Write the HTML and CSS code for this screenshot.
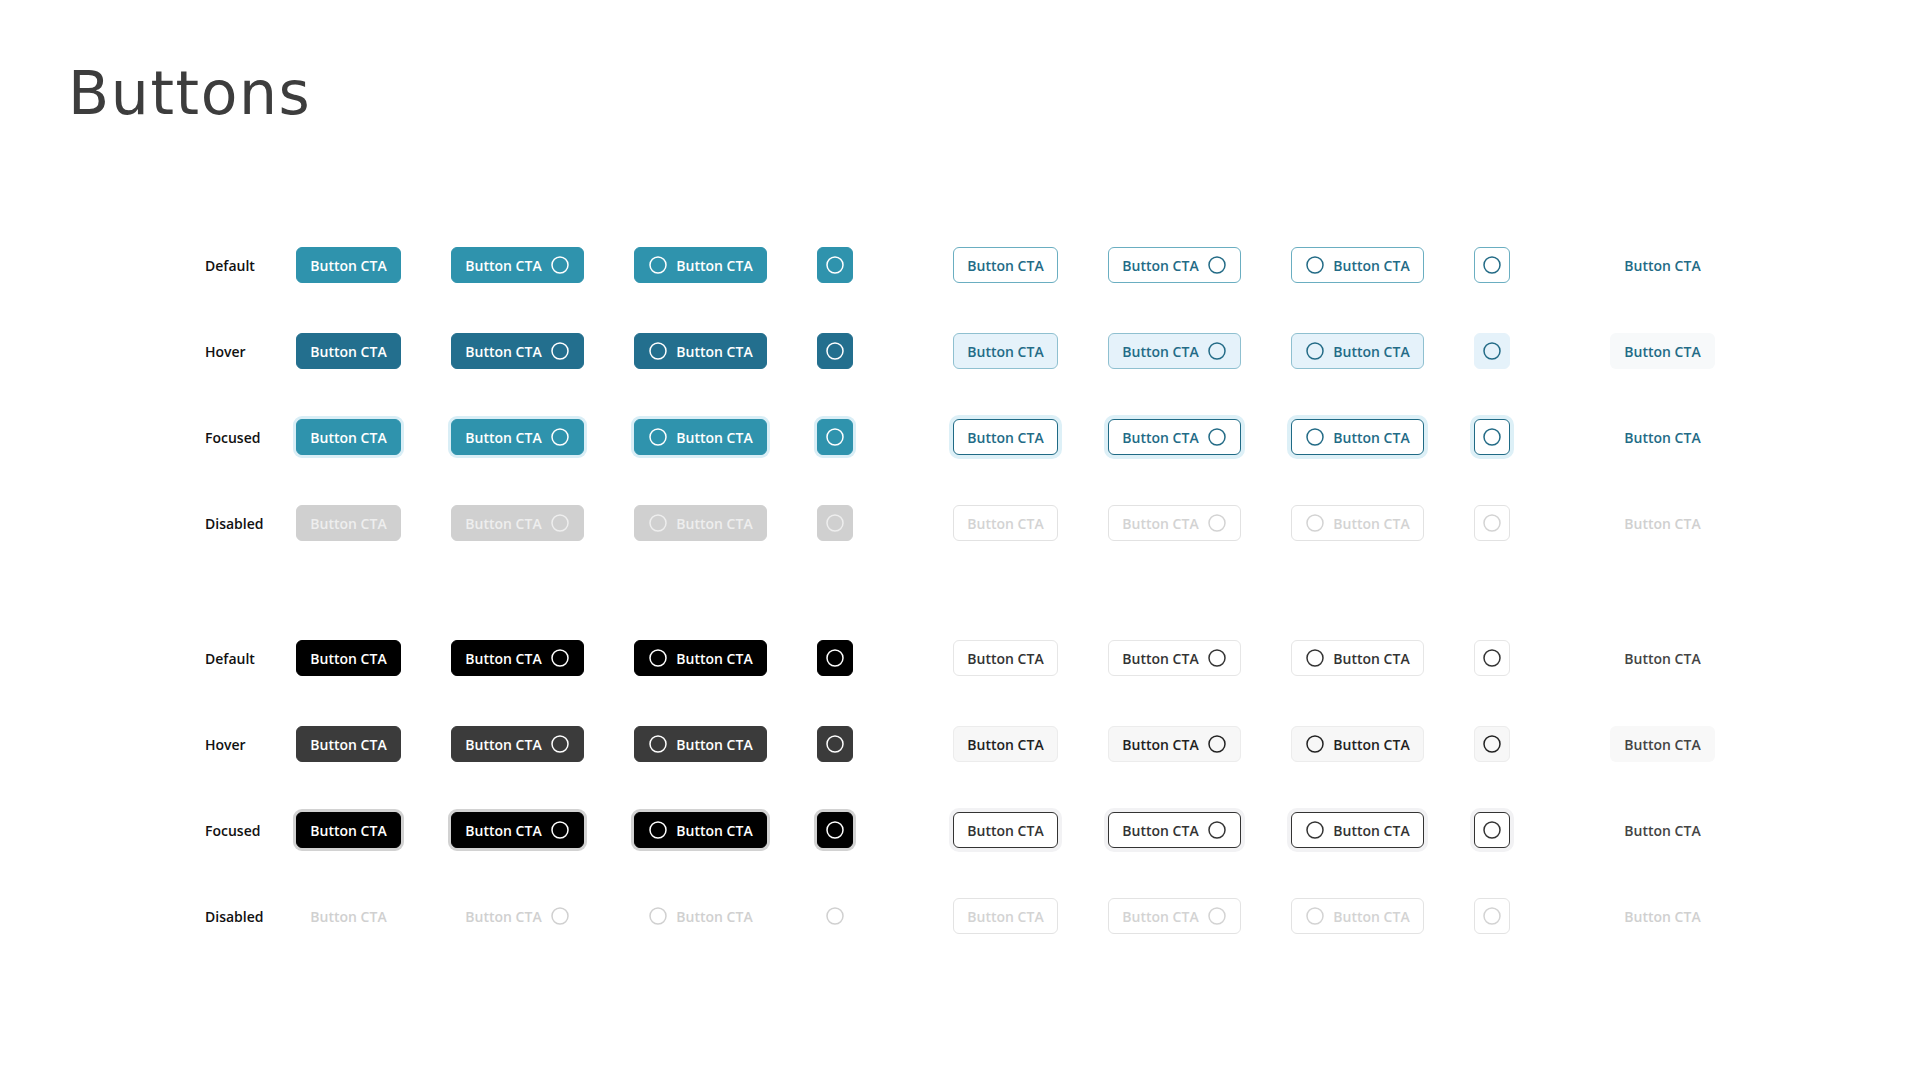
FILE: index.html
```html
<!DOCTYPE html>
<html>
<head>
<meta charset="utf-8">
<link rel="stylesheet" href="styles.css">
<title>Buttons</title>
</head>
<body>
<h1 class="title">Buttons</h1>

<section class="grid teal">
  <div class="label">Default</div>
  <div class="btn fill">Button CTA</div>
  <div class="btn fill">Button CTA <svg class="ico" viewBox="0 0 20 20"><circle cx="10" cy="10" r="8"/></svg></div>
  <div class="btn fill"><svg class="ico" viewBox="0 0 20 20"><circle cx="10" cy="10" r="8"/></svg> Button CTA</div>
  <div class="btn fill sq"><svg class="ico" viewBox="0 0 20 20"><circle cx="10" cy="10" r="8"/></svg></div>
  <div class="btn line">Button CTA</div>
  <div class="btn line">Button CTA <svg class="ico" viewBox="0 0 20 20"><circle cx="10" cy="10" r="8"/></svg></div>
  <div class="btn line"><svg class="ico" viewBox="0 0 20 20"><circle cx="10" cy="10" r="8"/></svg> Button CTA</div>
  <div class="btn line sq"><svg class="ico" viewBox="0 0 20 20"><circle cx="10" cy="10" r="8"/></svg></div>
  <div class="btn text">Button CTA</div>

  <div class="label">Hover</div>
  <div class="btn fill hover">Button CTA</div>
  <div class="btn fill hover">Button CTA <svg class="ico" viewBox="0 0 20 20"><circle cx="10" cy="10" r="8"/></svg></div>
  <div class="btn fill hover"><svg class="ico" viewBox="0 0 20 20"><circle cx="10" cy="10" r="8"/></svg> Button CTA</div>
  <div class="btn fill hover sq"><svg class="ico" viewBox="0 0 20 20"><circle cx="10" cy="10" r="8"/></svg></div>
  <div class="btn line hover">Button CTA</div>
  <div class="btn line hover">Button CTA <svg class="ico" viewBox="0 0 20 20"><circle cx="10" cy="10" r="8"/></svg></div>
  <div class="btn line hover"><svg class="ico" viewBox="0 0 20 20"><circle cx="10" cy="10" r="8"/></svg> Button CTA</div>
  <div class="btn line hover sq nob"><svg class="ico" viewBox="0 0 20 20"><circle cx="10" cy="10" r="8"/></svg></div>
  <div class="btn text hover">Button CTA</div>

  <div class="label">Focused</div>
  <div class="btn fill focus">Button CTA</div>
  <div class="btn fill focus">Button CTA <svg class="ico" viewBox="0 0 20 20"><circle cx="10" cy="10" r="8"/></svg></div>
  <div class="btn fill focus"><svg class="ico" viewBox="0 0 20 20"><circle cx="10" cy="10" r="8"/></svg> Button CTA</div>
  <div class="btn fill focus sq"><svg class="ico" viewBox="0 0 20 20"><circle cx="10" cy="10" r="8"/></svg></div>
  <div class="btn line focus">Button CTA</div>
  <div class="btn line focus">Button CTA <svg class="ico" viewBox="0 0 20 20"><circle cx="10" cy="10" r="8"/></svg></div>
  <div class="btn line focus"><svg class="ico" viewBox="0 0 20 20"><circle cx="10" cy="10" r="8"/></svg> Button CTA</div>
  <div class="btn line focus sq"><svg class="ico" viewBox="0 0 20 20"><circle cx="10" cy="10" r="8"/></svg></div>
  <div class="btn text">Button CTA</div>

  <div class="label">Disabled</div>
  <div class="btn fill off">Button CTA</div>
  <div class="btn fill off">Button CTA <svg class="ico" viewBox="0 0 20 20"><circle cx="10" cy="10" r="8"/></svg></div>
  <div class="btn fill off"><svg class="ico" viewBox="0 0 20 20"><circle cx="10" cy="10" r="8"/></svg> Button CTA</div>
  <div class="btn fill off sq"><svg class="ico" viewBox="0 0 20 20"><circle cx="10" cy="10" r="8"/></svg></div>
  <div class="btn line off">Button CTA</div>
  <div class="btn line off">Button CTA <svg class="ico" viewBox="0 0 20 20"><circle cx="10" cy="10" r="8"/></svg></div>
  <div class="btn line off"><svg class="ico" viewBox="0 0 20 20"><circle cx="10" cy="10" r="8"/></svg> Button CTA</div>
  <div class="btn line off sq"><svg class="ico" viewBox="0 0 20 20"><circle cx="10" cy="10" r="8"/></svg></div>
  <div class="btn text off">Button CTA</div>
</section>

<section class="grid dark">
  <div class="label">Default</div>
  <div class="btn fill">Button CTA</div>
  <div class="btn fill">Button CTA <svg class="ico" viewBox="0 0 20 20"><circle cx="10" cy="10" r="8"/></svg></div>
  <div class="btn fill"><svg class="ico" viewBox="0 0 20 20"><circle cx="10" cy="10" r="8"/></svg> Button CTA</div>
  <div class="btn fill sq"><svg class="ico" viewBox="0 0 20 20"><circle cx="10" cy="10" r="8"/></svg></div>
  <div class="btn line">Button CTA</div>
  <div class="btn line">Button CTA <svg class="ico" viewBox="0 0 20 20"><circle cx="10" cy="10" r="8"/></svg></div>
  <div class="btn line"><svg class="ico" viewBox="0 0 20 20"><circle cx="10" cy="10" r="8"/></svg> Button CTA</div>
  <div class="btn line sq"><svg class="ico" viewBox="0 0 20 20"><circle cx="10" cy="10" r="8"/></svg></div>
  <div class="btn text">Button CTA</div>

  <div class="label">Hover</div>
  <div class="btn fill hover">Button CTA</div>
  <div class="btn fill hover">Button CTA <svg class="ico" viewBox="0 0 20 20"><circle cx="10" cy="10" r="8"/></svg></div>
  <div class="btn fill hover"><svg class="ico" viewBox="0 0 20 20"><circle cx="10" cy="10" r="8"/></svg> Button CTA</div>
  <div class="btn fill hover sq"><svg class="ico" viewBox="0 0 20 20"><circle cx="10" cy="10" r="8"/></svg></div>
  <div class="btn line hover">Button CTA</div>
  <div class="btn line hover">Button CTA <svg class="ico" viewBox="0 0 20 20"><circle cx="10" cy="10" r="8"/></svg></div>
  <div class="btn line hover"><svg class="ico" viewBox="0 0 20 20"><circle cx="10" cy="10" r="8"/></svg> Button CTA</div>
  <div class="btn line hover sq"><svg class="ico" viewBox="0 0 20 20"><circle cx="10" cy="10" r="8"/></svg></div>
  <div class="btn text hover">Button CTA</div>

  <div class="label">Focused</div>
  <div class="btn fill focus">Button CTA</div>
  <div class="btn fill focus">Button CTA <svg class="ico" viewBox="0 0 20 20"><circle cx="10" cy="10" r="8"/></svg></div>
  <div class="btn fill focus"><svg class="ico" viewBox="0 0 20 20"><circle cx="10" cy="10" r="8"/></svg> Button CTA</div>
  <div class="btn fill focus sq"><svg class="ico" viewBox="0 0 20 20"><circle cx="10" cy="10" r="8"/></svg></div>
  <div class="btn line focus">Button CTA</div>
  <div class="btn line focus">Button CTA <svg class="ico" viewBox="0 0 20 20"><circle cx="10" cy="10" r="8"/></svg></div>
  <div class="btn line focus"><svg class="ico" viewBox="0 0 20 20"><circle cx="10" cy="10" r="8"/></svg> Button CTA</div>
  <div class="btn line focus sq"><svg class="ico" viewBox="0 0 20 20"><circle cx="10" cy="10" r="8"/></svg></div>
  <div class="btn text">Button CTA</div>

  <div class="label">Disabled</div>
  <div class="btn fill off">Button CTA</div>
  <div class="btn fill off">Button CTA <svg class="ico" viewBox="0 0 20 20"><circle cx="10" cy="10" r="8"/></svg></div>
  <div class="btn fill off"><svg class="ico" viewBox="0 0 20 20"><circle cx="10" cy="10" r="8"/></svg> Button CTA</div>
  <div class="btn fill off sq"><svg class="ico" viewBox="0 0 20 20"><circle cx="10" cy="10" r="8"/></svg></div>
  <div class="btn line off">Button CTA</div>
  <div class="btn line off">Button CTA <svg class="ico" viewBox="0 0 20 20"><circle cx="10" cy="10" r="8"/></svg></div>
  <div class="btn line off"><svg class="ico" viewBox="0 0 20 20"><circle cx="10" cy="10" r="8"/></svg> Button CTA</div>
  <div class="btn line off sq"><svg class="ico" viewBox="0 0 20 20"><circle cx="10" cy="10" r="8"/></svg></div>
  <div class="btn text off">Button CTA</div>
</section>
</body>
</html>
```

FILE: styles.css
```css
* { box-sizing: border-box; }

html, body {
  margin: 0;
  padding: 0;
  background: #ffffff;
}

body {
  font-family: "Open Sans", "Noto Sans", sans-serif;
  width: 1920px;
  height: 1080px;
  overflow: hidden;
}

.title {
  margin: 63px 0 0 68px;
  font-family: "DejaVu Sans", sans-serif;
  font-weight: 400;
  font-size: 60px;
  line-height: 60px;
  color: #3d3d3d;
  letter-spacing: 1.6px;
}

.grid {
  display: grid;
  grid-template-columns: 41px 105px 133px 133px 86px 105px 133px 133px 86px 105px;
  grid-auto-rows: 36px;
  column-gap: 50px;
  row-gap: 50px;
  margin-left: 205px;
  align-items: center;
}

.grid.teal { margin-top: 124px; }
.grid.dark { margin-top: 99px; }

.label {
  font-size: 14px;
  font-weight: 600;
  color: #111;
  white-space: nowrap;
}

.btn {
  height: 36px;
  display: flex;
  align-items: center;
  justify-content: center;
  gap: 8px;
  padding: 0 14px;
  border-radius: 6px;
  font-size: 14px;
  font-weight: 600;
  white-space: nowrap;
  border: 1px solid transparent;
}

.btn.sq {
  width: 36px;
  padding: 0;
  justify-self: start;
}

.ico {
  width: 20px;
  height: 20px;
  flex: none;
  fill: none;
  stroke: currentColor;
  stroke-width: 1.5;
}

/* ---------- Teal set ---------- */
.teal .fill { background: #2f93ad; color: #fff; border-color: #2f93ad; }
.teal .fill.hover { background: #236f8e; border-color: #236f8e; }
.teal .fill.focus { box-shadow: 0 0 0 3px #d9eef6; }
.teal .fill.off { background: #d0d0d0; border-color: #d0d0d0; color: #eeeeee; }

.teal .line { background: #fff; color: #236b86; border-color: #6aaec1; }
.teal .line.hover { background: #e5f2fa; border-color: #8fc0d0; }
.teal .line.hover.nob { border-color: #e5f2fa; }
.teal .line.focus { border: 1.5px solid #1f6a85; box-shadow: 0 0 0 4px #ddf0f7; }
.teal .line.off { color: #d3d3d3; border-color: #e2e2e2; }

.teal .text { color: #236b86; }
.teal .text.hover { background: #f7f9fa; }
.teal .text.off { color: #d0d0d0; }

/* ---------- Dark set ---------- */
.dark .fill { background: #000; color: #fff; border-color: #000; }
.dark .fill.hover { background: #3b3b3b; border-color: #3b3b3b; }
.dark .fill.focus { box-shadow: 0 0 0 3px #d2d2d2; }
.dark .fill.off { background: transparent; border-color: transparent; color: #d0d0d0; }

.dark .line { background: #fff; color: #333; border-color: #e6e6e6; }
.dark .line.hover { background: #f7f7f7; border-color: #ececec; color: #222; }
.dark .line.focus { border: 1.5px solid #333; box-shadow: 0 0 0 4px #f2f2f4; }
.dark .line.off { color: #d3d3d3; border-color: #e3e3e3; }

.dark .text { color: #444; }
.dark .text.hover { background: #f8f8f8; }
.dark .text.off { color: #d0d0d0; }
```
